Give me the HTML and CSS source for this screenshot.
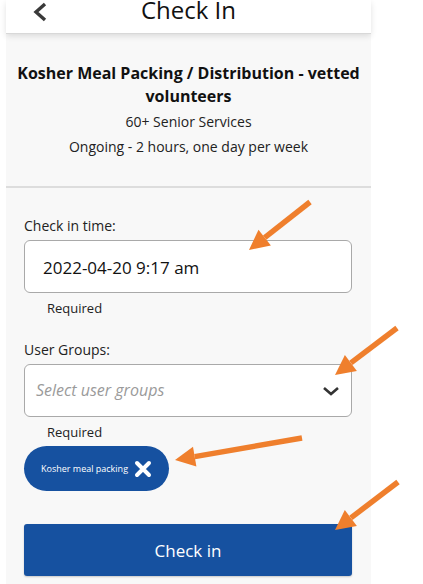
FILE: index.html
```html
<!DOCTYPE html>
<html lang="en">
<head>
<meta charset="utf-8">
<title>Check In</title>
<link rel="stylesheet" href="styles.css">
</head>
<body>
<div class="app">
  <header class="topbar">
    <div class="topbar-left">
      <svg class="back" width="16" height="20" viewBox="0 0 16 20"><polyline points="13,2 4,10 13,18" fill="none" stroke="#3a3a3a" stroke-width="3.4"/></svg>
    </div>
    <h1 class="topbar-title">Check In</h1>
    <div></div>
  </header>
  <section class="info">
    <h2 class="info-title">Kosher Meal Packing / Distribution - vetted volunteers</h2>
    <p class="info-line">60+ Senior Services</p>
    <p class="info-line">Ongoing - 2 hours, one day per week</p>
  </section>
  <section class="form">
    <label class="field-label">Check in time:</label>
    <div class="input">2022-04-20 9:17 am</div>
    <div class="hint">Required</div>
    <label class="field-label field-label-gap">User Groups:</label>
    <div class="select">
      <span class="placeholder">Select user groups</span>
      <svg class="chev" width="18" height="10" viewBox="0 0 18 10"><polyline points="2,2 9,8 16,2" fill="none" stroke="#333" stroke-width="2.6"/></svg>
    </div>
    <div class="hint">Required</div>
    <div class="chips">
      <div class="chip">
        <span class="chip-text">Kosher meal packing</span>
        <svg class="chip-x" width="18" height="18" viewBox="0 0 18 18"><path d="M3 3 L15 15 M15 3 L3 15" stroke="#fff" stroke-width="4" stroke-linecap="round"/></svg>
      </div>
    </div>
    <button class="submit">Check in</button>
  </section>
</div>
<svg class="annotations" width="423" height="584" viewBox="0 0 423 584">
  <g fill="#ef7f2d" stroke="#ef7f2d">
    <line x1="310" y1="202" x2="264.7" y2="237.6" stroke-width="5.5"/>
    <polygon points="249,250 270.9,245.5 258.5,229.7" stroke="none"/>
    <line x1="397" y1="328" x2="350.9" y2="362.9" stroke-width="5.5"/>
    <polygon points="335,375 356.9,370.9 344.9,354.9" stroke="none"/>
    <line x1="302" y1="438" x2="194.7" y2="456.6" stroke-width="5.5"/>
    <polygon points="175,460 196.4,466.4 193,446.8" stroke="none"/>
    <line x1="398" y1="482" x2="350.9" y2="517.9" stroke-width="5.5"/>
    <polygon points="335,530 356.9,525.9 344.8,509.9" stroke="none"/>
  </g>
</svg>
</body>
</html>
```

FILE: styles.css
```css
html, body {
  margin: 0;
  padding: 0;
  height: 100%;
  overflow: hidden;
  background: #ffffff;
}
body {
  position: relative;
  font-family: "Open Sans", "Noto Sans", sans-serif;
  color: #161616;
}
.app {
  width: 365px;
  margin-left: 6px;
  min-height: 584px;
  background: #f8f8f8;
}
.topbar {
  position: relative;
  z-index: 1;
  height: 33px;
  background: #ffffff;
  display: grid;
  grid-template-columns: 1fr auto 1fr;
  align-items: start;
  box-shadow: 0 1px 0 #d8d8d8, 0 3px 6px rgba(0, 0, 0, 0.12);
}
.topbar-left {
  padding-left: 26px;
  padding-top: 2px;
}
.back {
  display: block;
}
.topbar-title {
  margin: 0;
  font-size: 24px;
  font-weight: 400;
  line-height: 20px;
  color: #111;
}
.info {
  padding: 29px 10px 27px;
  text-align: center;
  border-bottom: 2px solid #dddddd;
}
.info-title {
  margin: 0 0 1px;
  font-size: 16px;
  font-weight: 700;
  line-height: 23px;
  color: #111;
}
.info-line {
  margin: 0;
  font-size: 14px;
  line-height: 25px;
  color: #222;
}
.form {
  padding: 28px 19px 0 18px;
  display: flex;
  flex-direction: column;
  align-items: stretch;
}
.field-label {
  font-size: 14px;
  line-height: 20px;
  color: #222;
  margin-bottom: 4px;
}
.field-label-gap {
  margin-top: 23px;
}
.input, .select {
  box-sizing: border-box;
  height: 53px;
  background: #fff;
  border: 1.5px solid #a9a9a9;
  border-radius: 6px;
  display: flex;
  align-items: center;
}
.input {
  padding: 1px 0 0 18px;
  font-size: 17px;
  color: #111;
}
.select {
  padding: 0 11px 0 11px;
  justify-content: space-between;
}
.placeholder {
  font-size: 16px;
  font-style: italic;
  color: #9a9a9a;
  margin-top: -2px;
}
.chev {
  display: block;
  margin-top: 1px;
}
.hint {
  margin-top: 6px;
  padding-left: 23px;
  font-size: 13px;
  line-height: 18px;
  color: #222;
}
.chips {
  display: flex;
  margin-top: 5px;
}
.chip {
  height: 45px;
  width: 145px;
  box-sizing: border-box;
  border-radius: 23px;
  background: #1651a0;
  display: flex;
  align-items: center;
  padding-left: 17px;
  gap: 6px;
}
.chip-text {
  font-size: 9px;
  color: #fff;
  white-space: nowrap;
}
.chip-x {
  display: block;
}
.submit {
  margin-top: 33px;
  height: 52px;
  border: none;
  border-radius: 3px;
  background: #1651a0;
  color: #fff;
  font-family: "Open Sans", "Noto Sans", sans-serif;
  font-size: 17px;
  box-shadow: 0 1px 2px rgba(0, 0, 0, 0.2);
}
.annotations {
  position: absolute;
  left: 0;
  top: 0;
  pointer-events: none;
}
```
